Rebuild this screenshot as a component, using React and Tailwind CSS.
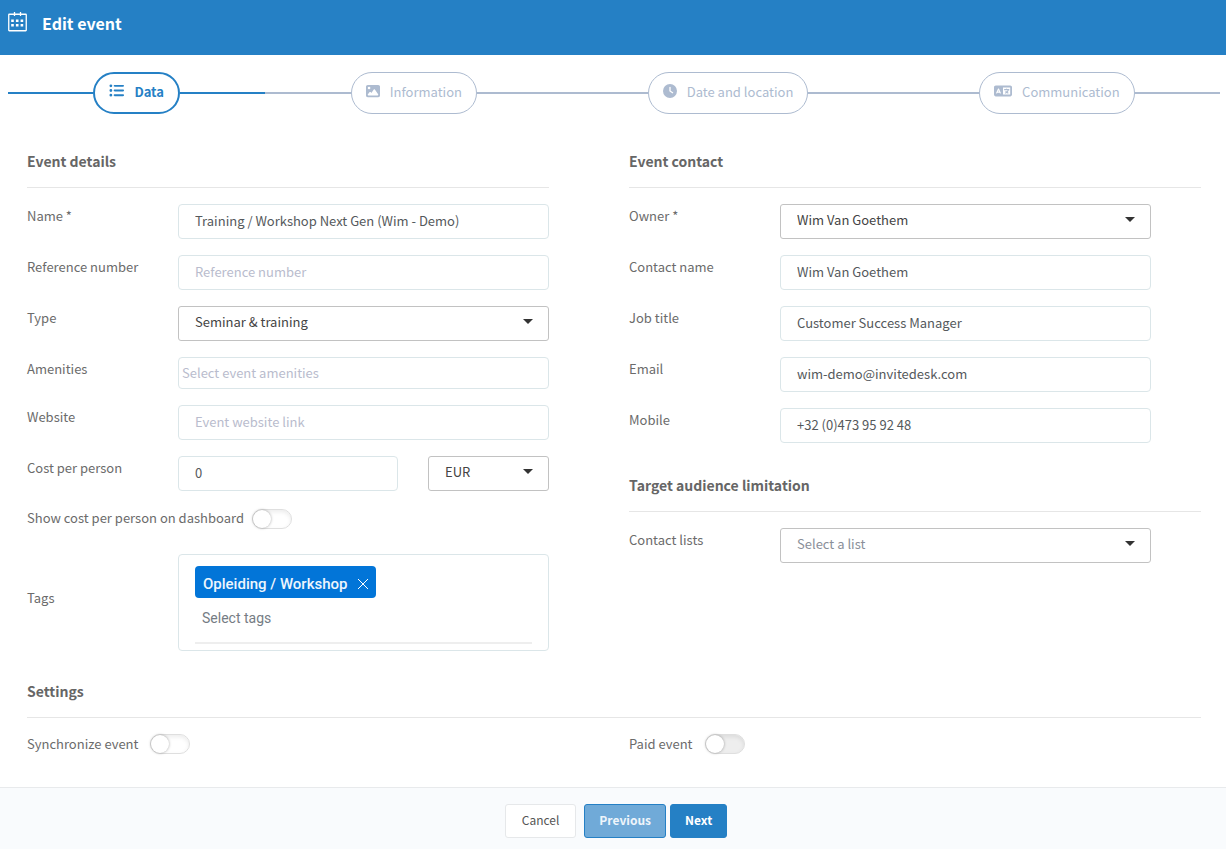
import React, { useState } from "react";
import { FaClock, FaImage, FaLanguage, FaListUl } from "react-icons/fa6";

// --- CONSTANTS ---
const STEPS = [
  { label: "Data", icon: FaListUl, size: 15, active: true },
  { label: "Information", icon: FaImage, size: 14 },
  { label: "Date and location", icon: FaClock, size: 14 },
  { label: "Communication", icon: FaLanguage, size: 18 },
];

const FIELD =
  "block h-[35px] w-full min-w-0 rounded border border-[#dbe6e9] bg-white px-4 pb-[3px] text-[13px] text-[#55595c] outline-none placeholder:text-[#b9bccd]";

// --- HELPER COMPONENTS ---
const CalendarIcon = () => (
  <svg width="19" height="20" viewBox="0 0 19 20" fill="none" stroke="currentColor">
    <rect x="0.75" y="2.25" width="17.5" height="16.5" rx="0.5" strokeWidth="1.3" />
    <path d="M6.5 0v4M12.5 0v4" strokeWidth="1.3" />
    <path
      d="M3.2 8.7h2.6M7.9 8.7h2.6M12.6 8.7h2.6M3.2 13.3h2.6M7.9 13.3h2.6M12.6 13.3h2.6"
      strokeWidth="2.6"
    />
  </svg>
);

const Step = ({ step }) => {
  const Icon = step.icon;
  const line = step.active ? "bg-[#2580c5]" : "bg-[#adbbd0]";

  return (
    <li className="flex flex-auto items-center">
      <span className={`h-0.5 flex-1 ${line}`} />
      <button
        type="button"
        className={`flex h-[42px] items-center gap-2.5 rounded-full px-[14px] pb-[3px] text-[13px] ${
          step.active
            ? "border-2 border-[#2580c5] font-bold text-[#2580c5]"
            : "border border-[#adbbd0] text-[#adbbd0]"
        }`}
      >
        <Icon size={step.size} className="mb-0.5" />
        {step.label}
      </button>
      <span className={`h-0.5 flex-1 ${line}`} />
    </li>
  );
};

const SectionTitle = ({ children }) => (
  <h2 className="mb-4 border-b border-[#e6e6e6] pb-[14px] text-sm leading-6 font-bold text-[#666]">
    {children}
  </h2>
);

const Row = ({ id, label, children }) => (
  <div className="flex items-start">
    <label htmlFor={id} className="w-[151px] shrink-0 pt-0.5 leading-5">
      {label}
    </label>
    <div className="min-w-0 flex-1">{children}</div>
  </div>
);

const TextRow = ({ id, label, value, placeholder, type = "text" }) => (
  <Row id={id} label={label}>
    <input
      id={id}
      type={type}
      defaultValue={value}
      placeholder={placeholder}
      className={FIELD}
    />
  </Row>
);

const Select = ({ id, options, muted, ariaLabel }) => (
  <div className="relative">
    <select
      id={id}
      aria-label={ariaLabel}
      className={`block h-[35px] w-full appearance-none rounded-[3px] border border-[#c2c2c2] bg-white px-4 pb-[3px] text-[13px] outline-none ${
        muted ? "text-[#8a8f99]" : "text-[#444]"
      }`}
    >
      {options.map((option) => (
        <option key={option}>{option}</option>
      ))}
    </select>
    <svg
      className="pointer-events-none absolute top-[13px] right-4"
      width="10"
      height="5"
      viewBox="0 0 10 5"
      fill="#333"
    >
      <path d="M0 0h10L5 5z" />
    </svg>
  </div>
);

const Toggle = ({ id, disabled }) => (
  <input
    id={id}
    type="checkbox"
    disabled={disabled}
    className="relative h-5 w-10 shrink-0 appearance-none rounded-full border border-[#dfdfdf] bg-white shadow-[inset_0_2px_4px_rgba(0,0,0,0.08)] before:absolute before:top-0 before:left-0 before:size-[18px] before:rounded-full before:bg-white before:shadow-[0_0_3px_rgba(0,0,0,0.35)] checked:bg-[#2580c5] checked:before:left-5 disabled:bg-[#eee]"
  />
);

// --- MAIN COMPONENT ---
const App = () => {
  const [tags, setTags] = useState(["Opleiding / Workshop"]);

  const removeTag = (tag) => setTags(tags.filter((t) => t !== tag));

  return (
    <div className="flex min-h-screen flex-col bg-white font-['Noto_Sans_CJK_SC',sans-serif] text-[13px] text-[#6b6b6b]">
      <header className="flex h-[55px] items-start gap-[15px] bg-[#2580c5] px-2 pt-3 text-white">
        <CalendarIcon />
        <h1 className="text-base leading-[22px] font-bold">Edit event</h1>
      </header>

      <ol className="flex pt-[17px] pr-1.5 pl-2">
        {STEPS.map((step) => (
          <Step key={step.label} step={step} />
        ))}
      </ol>

      <form className="flex flex-1 flex-col">
        <div className="grid grid-cols-2 pt-[35px] pr-2.5 pl-3">
          {/* Event details */}
          <section className="pr-[65px] pl-[15px]">
            <SectionTitle>Event details</SectionTitle>
            <div className="flex flex-col gap-4">
              <TextRow
                id="name"
                label="Name *"
                value="Training / Workshop Next Gen (Wim - Demo)"
              />
              <TextRow
                id="reference"
                label="Reference number"
                placeholder="Reference number"
              />
              <Row id="type" label="Type">
                <Select id="type" options={["Seminar & training"]} />
              </Row>
              <Row id="amenities" label="Amenities">
                <input
                  id="amenities"
                  type="text"
                  placeholder="Select event amenities"
                  className="block h-8 w-full rounded border border-[#dbe6e9] px-[3px] pb-0.5 text-[13px] outline-none placeholder:text-[#b9bccd]"
                />
              </Row>
              <TextRow
                id="website"
                label="Website"
                placeholder="Event website link"
              />
              <Row id="cost" label="Cost per person">
                <div className="flex gap-[30px]">
                  <input
                    id="cost"
                    type="text"
                    defaultValue="0"
                    className={FIELD}
                  />
                  <div className="w-[121px] shrink-0">
                    <Select ariaLabel="Currency" options={["EUR"]} />
                  </div>
                </div>
              </Row>
              <div className="flex items-center gap-2 pt-0.5">
                <label htmlFor="show-cost" className="pb-0.5 leading-4">
                  Show cost per person on dashboard
                </label>
                <Toggle id="show-cost" />
              </div>
              <div className="flex items-center pt-[9px]">
                <label htmlFor="tags" className="w-[151px] shrink-0 pb-2.5">
                  Tags
                </label>
                <div className="min-w-0 flex-1 rounded border border-[#dbe6e9] px-4 pt-[11px] pb-1.5 font-[Roboto,sans-serif]">
                  {tags.map((tag) => (
                    <span
                      key={tag}
                      className="inline-flex h-8 items-center gap-2.5 rounded bg-[#0275d8] px-2 pt-1 text-[15px] font-medium text-[#eef6fd]"
                    >
                      {tag}
                      <button
                        type="button"
                        aria-label="Remove tag"
                        onClick={() => removeTag(tag)}
                      >
                        <svg width="10" height="10" viewBox="0 0 10 10" stroke="#fff">
                          <path d="M0 0l10 10M10 0L0 10" />
                        </svg>
                      </button>
                    </span>
                  ))}
                  <input
                    id="tags"
                    type="text"
                    placeholder="Select tags"
                    className="block h-[46px] w-full border-b-2 border-[#eee] px-[7px] pb-1 text-sm outline-none placeholder:text-[#757c84]"
                  />
                </div>
              </div>
            </div>
          </section>

          {/* Event contact */}
          <section className="px-[15px]">
            <SectionTitle>Event contact</SectionTitle>
            <div className="mb-[30px] flex flex-col gap-4 pr-[50px]">
              <Row id="owner" label="Owner *">
                <Select id="owner" options={["Wim Van Goethem"]} />
              </Row>
              <TextRow id="contact" label="Contact name" value="Wim Van Goethem" />
              <TextRow id="job" label="Job title" value="Customer Success Manager" />
              <TextRow
                id="email"
                type="email"
                label="Email"
                value="wim-demo@invitedesk.com"
              />
              <TextRow
                id="mobile"
                type="tel"
                label="Mobile"
                value="+32 (0)473 95 92 48"
              />
            </div>

            <SectionTitle>Target audience limitation</SectionTitle>
            <div className="pr-[50px]">
              <Row id="lists" label="Contact lists">
                <Select id="lists" options={["Select a list"]} muted />
              </Row>
            </div>
          </section>
        </div>

        {/* Settings */}
        <section className="pt-7 pr-[25px] pb-[33px] pl-[27px]">
          <SectionTitle>Settings</SectionTitle>
          <div className="grid grid-cols-2 gap-[30px]">
            <div className="flex items-center gap-3">
              <label htmlFor="sync">Synchronize event</label>
              <Toggle id="sync" />
            </div>
            <div className="flex items-center gap-3">
              <label htmlFor="paid">Paid event</label>
              <Toggle id="paid" disabled />
            </div>
          </div>
        </section>

        <footer className="flex flex-1 items-start justify-center gap-1 border-t border-[#e8eaec] bg-[#f9fbfd] py-4 pl-1.5 text-xs">
          <button
            type="button"
            className="mr-1 h-[34px] rounded-[3px] border border-[#e6e8ea] bg-white px-4 pb-[3px] text-[#555]"
          >
            Cancel
          </button>
          <button
            type="button"
            className="h-[34px] rounded-[3px] border border-[#2580c5] bg-[#70aad8] px-[14px] pb-[3px] font-bold text-[#eef5fb]"
          >
            Previous
          </button>
          <button
            type="submit"
            className="h-[34px] rounded-[3px] border border-[#2580c5] bg-[#2580c5] px-[14px] pb-[3px] font-bold text-white"
          >
            Next
          </button>
        </footer>
      </form>
    </div>
  );
};

export default App;
